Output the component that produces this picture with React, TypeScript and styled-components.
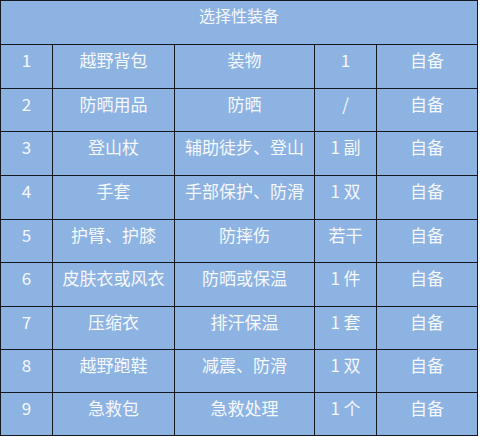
import React from 'react';
import styled, { createGlobalStyle } from 'styled-components';

const GlobalStyle = createGlobalStyle`
  html, body {
    margin: 0;
    padding: 0;
    background: #ffffff;
  }
`;

const rows = [
  ['1', '越野背包', '装物', '1', '自备'],
  ['2', '防晒用品', '防晒', '/', '自备'],
  ['3', '登山杖', '辅助徒步、登山', '1 副', '自备'],
  ['4', '手套', '手部保护、防滑', '1 双', '自备'],
  ['5', '护臂、护膝', '防摔伤', '若干', '自备'],
  ['6', '皮肤衣或风衣', '防晒或保温', '1 件', '自备'],
  ['7', '压缩衣', '排汗保温', '1 套', '自备'],
  ['8', '越野跑鞋', '减震、防滑', '1 双', '自备'],
  ['9', '急救包', '急救处理', '1 个', '自备'],
];

const widths = [52, 122, 140, 62, 101];
const heights = [44, 44, 43, 44, 44, 43, 44, 43, 43, 43];

export default function App() {
  return (
    <>
      <GlobalStyle />
      <Table>
        <colgroup>
          {widths.map((w, i) => (
            <col key={i} style={{ width: w }} />
          ))}
        </colgroup>
        <tbody>
          <Row h={heights[0]}>
            <HeadCell colSpan={5}>选择性装备</HeadCell>
          </Row>
          {rows.map((r, i) => (
            <Row key={i} h={heights[i + 1]}>
              {r.map((c, j) => (
                <Cell key={j}>{c}</Cell>
              ))}
            </Row>
          ))}
        </tbody>
      </Table>
    </>
  );
}

const Table = styled.table`
  width: 478px;
  border-collapse: collapse;
  table-layout: fixed;
  background: #8db3e2;
  border: 1.5px solid #111;
  font-family: 'Noto Sans CJK SC', 'Microsoft YaHei', sans-serif;
  color: #f5f8fd;
`;

const Row = styled.tr<{ h: number }>`
  height: ${({ h }) => h}px;
`;

const Cell = styled.td`
  border: 1px solid #15181f;
  padding: 4px 0 0 0;
  vertical-align: top;
  text-align: center;
  font-size: 17px;
  line-height: 22px;
  white-space: nowrap;
`;

const HeadCell = styled(Cell)`
  padding-top: 3px;
  font-size: 16px;
`;
